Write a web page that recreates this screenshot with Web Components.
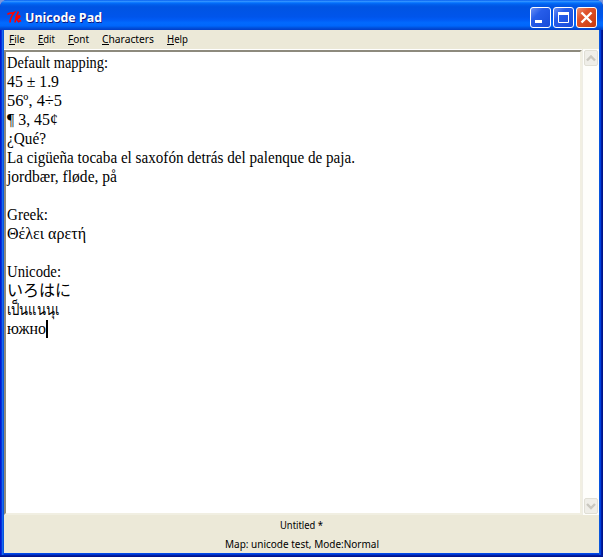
<!DOCTYPE html>
<html lang="en"><head><meta charset="utf-8"><title>Unicode Pad</title>
<style>html,body{margin:0;width:603px;height:557px;overflow:hidden;background:#7b96dc}</style></head>
<body>
<pad-window>
 <title-bar slot="title"></title-bar>
 <menu-bar slot="menu"></menu-bar>
 <text-pad slot="body"></text-pad>
 <scroll-bar slot="body"></scroll-bar>
 <status-line slot="status"><fit-text text="Untitled *" w="43"></fit-text></status-line>
 <status-line slot="status"><fit-text text="Map: unicode test, Mode:Normal" w="154"></fit-text></status-line>
</pad-window>
<script>
const define=(name,html,init)=>customElements.define(name,class extends HTMLElement{
  constructor(){super();this.attachShadow({mode:'open'}).innerHTML=html;if(init)init(this.shadowRoot,this);}
});
/* One line of text set to a given advance width; "key" underlines the first letter. */
define('fit-text',`<style>:host{display:block;white-space:pre;height:19px}svg{display:block;overflow:visible}text{fill:currentColor}</style><svg height="19"><text x="0" y="14"></text></svg>`,(r,h)=>{
  const t=r.querySelector('text'),w=h.getAttribute('w'),k=h.getAttribute('key');
  t.textContent=h.getAttribute('text');
  r.querySelector('svg').setAttribute('width',w||1);
  if(w){t.setAttribute('textLength',w);t.setAttribute('lengthAdjust','spacingAndGlyphs');}
  if(k){t.setAttribute('y',13);t.insertAdjacentHTML('afterend',`<path d="M0 14.5h${k}" stroke="currentColor"/>`);}
});
define('pad-window',`<style>
:host{display:flex;flex-direction:column;box-sizing:border-box;width:603px;height:557px;border-radius:7px 7px 0 0;overflow:hidden;padding:0 4px 4px;background:linear-gradient(#ece9d8,#ece9d8) 4px 30px/595px 523px no-repeat,linear-gradient(90deg,#0019cf 0 1px,#0831d9 1px 2px,#166aee 2px 3px,#0855dd 3px 4px,transparent 4px 599px,#0855dd 599px 600px,#0040e0 600px 601px,#001ea0 601px 602px,#00138c 602px) 0 0/603px 555px no-repeat,linear-gradient(#0048e8 0 554px,#0036d0 554px 555px,#001ea0 555px 556px,#00138c 556px)}
.body{display:flex;box-sizing:border-box;height:466px;background:#fff}
.status{display:flex;flex-direction:column}
</style><slot name="title"></slot><slot name="menu"></slot><div class="body"><slot name="body"></slot></div><div class="status"><slot name="status"></slot></div>`);
define('title-bar',`<style>
:host{display:flex;align-items:center;box-sizing:border-box;height:30px;margin:0 -4px;padding:4px 6px 0 7px;color:#fff;font:bold 13px "Open Sans","Noto Sans",sans-serif;text-shadow:1px 1px #0b1883;
background:linear-gradient(#0058ee 0,#3593ff 4%,#288eff 6%,#127dff 8%,#036ffc 10%,#0262ee 14%,#0057e5 20%,#0054e3 24%,#0055eb 56%,#005bf5 66%,#026afe 76%,#0066fc 86%,#0054e0 92%,#0144d0 97%,#0040c8 100%)}
.t{flex:1;margin:0 0 0 2px}.b{display:flex;gap:2px}.b svg{display:block}.tk{margin-top:-1px}
</style><svg class="tk" width="16" height="16" viewBox="0 0 16 16" fill="none" stroke="#f00" stroke-width="1.6"><path d="M.5 5.5C2 3.2 4 4.8 7 3.5C4.5 7 3.2 9 3 13.5M11.5 2.5C9.5 6 8.5 9 8 13.5M8.5 10C11 9.5 13 8.5 12.8 7C12.3 6 10.5 8 9.5 9.8L11.5 12.8L14 11.5"/></svg><span class="t"><fit-text text="Unicode Pad" w="77"></fit-text></span><span class="b"></span>`,r=>{
 const g=['<path d="M5 13h7v3H5z" fill="#fff"/>','<path d="M5.5 6.5h10v9h-10z" fill="none" stroke="#fff"/><path d="M5 5h11v3H5z" fill="#fff"/>','<path d="M5.5 5.5L15.5 15.5M15.5 5.5L5.5 15.5" stroke="#fff" stroke-width="2.4"/>'];
 r.querySelector('.b').innerHTML=g.map((p,i)=>`<svg width="21" height="21"><defs><linearGradient id="g${i}" x2="1" y2="1"><stop stop-color="${i==2?'#ef9375':'#7294f5'}"/><stop offset=".35" stop-color="${i==2?'#e0532c':'#275de9'}"/><stop offset="1" stop-color="${i==2?'#c6380c':'#164bd9'}"/></linearGradient></defs><rect x=".5" y=".5" width="20" height="20" rx="2.5" fill="url(#g${i})" stroke="#fff"/>${p}</svg>`).join('');
});
define('menu-bar',`<style>:host{display:flex;box-sizing:border-box;height:19px;padding:0 0 0 5px;gap:13px;font:11px "Noto Sans","Open Sans",sans-serif;color:#000}</style>
<fit-text text="File" w="16" key="6"></fit-text><fit-text text="Edit" w="17" key="6"></fit-text><fit-text text="Font" w="21" key="6"></fit-text><fit-text text="Characters" w="52" key="7"></fit-text><fit-text text="Help" w="21" key="7"></fit-text>`);
define('text-pad',`<style>:host{display:block;box-sizing:border-box;width:578px;height:465px;margin-top:1px;background:#fff;border:2px solid;border-color:#8d8a7d #f1efe2 #f1efe2 #8d8a7d;padding:2px 0 0 1px;color:#000;font:16px "Liberation Serif","Noto Sans CJK JP","Noto Sans",serif}
.c{position:absolute;left:46px;top:320px;width:2px;height:18px;background:#000}</style>`,r=>{
 const L=[['Default mapping:',101],['45 ± 1.9',52],['56º, 4÷5',55],['¶ 3, 45¢',51],['¿Qué?',39],['La cigüeña tocaba el saxofón detrás del palenque de paja.',348],['jordbær, fløde, på',110],['',0],['Greek:',41],['Θέλει αρετή',79],['',0],['Unicode:',54],['いろはに',64],['เป็นแนนุเ',52],['южно',39]];
 r.innerHTML+=L.map(([t,w])=>`<fit-text text="${t}" ${w?`w="${w}"`:''}></fit-text>`).join('')+'<div class="c"></div>';
});
define('scroll-bar',`<style>:host{display:flex;flex-direction:column;justify-content:space-between;box-sizing:border-box;width:17px;height:466px;padding:1px 1px 0 0;background:#fefefb;border-left:1px solid #eeede5}svg{display:block}</style>
<svg width="15" height="17"><rect x="1.5" y=".5" width="13" height="15" rx="1.5" fill="#efeee8" stroke="#e0dfd5"/><path d="M4 10.5L8 6.5L12 10.5" fill="none" stroke="#c9c7bf" stroke-width="2.4"/></svg><svg width="15" height="17"><rect x="1.5" y=".5" width="13" height="15" rx="1.5" fill="#efeee8" stroke="#e0dfd5"/><path d="M4 6L8 10L12 6" fill="none" stroke="#c9c7bf" stroke-width="2.4"/></svg>`);
define('status-line',`<style>:host{display:flex;justify-content:center;height:19px;font:11px "Noto Sans","Open Sans",sans-serif;color:#000}</style><slot></slot>`);
</script></body></html>
